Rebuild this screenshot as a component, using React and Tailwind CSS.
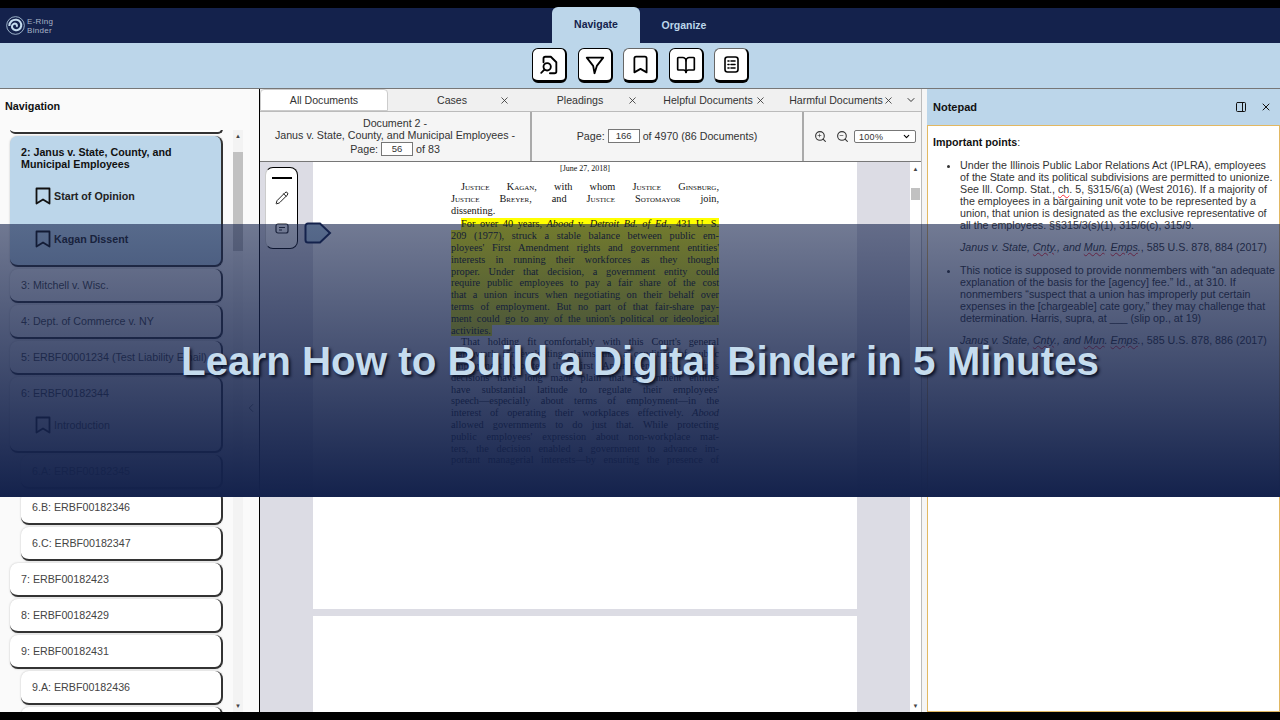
import React from 'react'
import { BookOpen, Bookmark, ChevronDown, ChevronLeft, Minus, PanelRight, Pencil, Plus, Search, X } from 'lucide-react'

const serif = "font-['Liberation_Serif',serif]"
const sc = '[font-variant:small-caps]'
const wavy = 'underline decoration-wavy decoration-red-500 decoration-1'

function NavItem({ label, child, active, children }) {
  return (
    <div className={`${child ? 'ml-[11px]' : ''} ${active ? 'bg-[#bcd6ea]' : 'bg-white'} ${children ? 'pb-[5px]' : 'pb-[10px]'} rounded-lg border-r-2 border-b-2 border-[#333] shadow-[0_0_2px_#bbb] mb-0.5 px-[11px] pt-[10px] min-h-[34px] text-[#444] text-[10.700px] leading-[12px]`}>
      <div className={active ? 'font-bold text-[#111]' : ''}>{label}</div>
      {children && <div className="mt-[4px]">{children}</div>}
    </div>
  )
}

function Mark({ label, strong }) {
  return (
    <div className={`flex items-center gap-[3px] ml-[14px] h-[43px] ${strong ? 'font-bold text-[#222]' : ''}`}>
      <svg width="16" height="18" viewBox="0 0 16 18" fill="none" stroke="#111" strokeWidth="1.800" strokeLinejoin="round">
        <path d="M1.500 1.500h13v15L8 12.500l-6.500 4z" />
      </svg>
      <span>{label}</span>
    </div>
  )
}

function Tab({ label, width, close, active }) {
  return (
    <div className={`${width} h-full flex items-center justify-center relative text-[#333] pt-px ${active ? 'bg-white rounded-t border border-[#ccc]' : ''}`}>
      <span>{label}</span>
      {close && <X size={11} strokeWidth={1.800} className="absolute right-[6px] text-[#333]" />}
    </div>
  )
}

function ToolBtn({ children, soft }) {
  return (
    <div className={`w-[35px] h-[35px] bg-white rounded-md border border-black border-r-[2px] border-b-[3px] ${soft ? 'border-t-[#666] border-l-[#666]' : ''} flex items-center justify-center text-black`}>
      {children}
    </div>
  )
}

function Line({ children }) {
  return <div className="text-justify [text-align-last:justify]">{children}</div>
}

const highlighted = [
  <>For over 40 years, <i>Abood</i> v. <i>Detroit Bd. of Ed.,</i> 431 U. S.</>,
  '209 (1977), struck a stable balance between public em-',
  "ployees' First Amendment rights and government entities'",
  'interests in running their workforces as they thought',
  'proper. Under that decision, a government entity could',
  'require public employees to pay a fair share of the cost',
  'that a union incurs when negotiating on their behalf over',
  'terms of employment. But no part of that fair-share pay-',
  "ment could go to any of the union's political or ideological",
]

const dissent = [
  'framework for evaluating claims that a condition of public',
  "employment violates the First Amendment. The Court's",
  'decisions have long made plain that government entities',
  "have substantial latitude to regulate their employees'",
  'speech—especially about terms of employment—in the',
  <>interest of operating their workplaces effectively. <i>Abood</i></>,
  'allowed governments to do just that. While protecting',
  "public employees' expression about non-workplace mat-",
  'ters, the decision enabled a government to advance im-',
  'portant managerial interests—by ensuring the presence of',
]

function Cite({ page }) {
  return (
    <>
      <i>Janus v. State, <span className={wavy}>Cnty</span>., and <span className={wavy}>Mun</span>. <span className={wavy}>Emps</span>.</i>, 585 U.S. 878, {page} (2017)
    </>
  )
}

export default function App() {
  return (
    <div className="relative w-[1280px] h-[720px] overflow-hidden bg-black font-['Liberation_Sans',Arial,sans-serif] flex flex-col">
      <div className="h-2 bg-black shrink-0" />

      {/* top nav */}
      <div className="h-[35px] shrink-0 bg-[#14224c] flex relative">
        <div className="flex items-center gap-[2px] pl-[6px] w-[552px]">
          <svg width="19" height="19" viewBox="0 0 20 20" fill="none" stroke="#c5dcee">
            <circle cx="10" cy="10" r="9.300" strokeWidth="0.800" />
            <path d="M3.500 10.500C3.500 6 7 3.500 11 4c3.500.5 5.500 3.500 5 6.500-.5 3-3.500 5-6.500 4.300C7 14.300 5.800 12 6.500 10c.6-1.600 2.500-2.500 4-1.700 1.200.7 1.300 2.200.4 3" strokeWidth="2.200" />
          </svg>
          <div className="text-[8px] leading-[9px] tracking-[0.3px] text-[#a9b4c6]">E-Ring<br />Binder</div>
        </div>
        <div className="w-[88px] -mt-[1px] h-[36px] bg-[#bcd6ea] rounded-t-md flex items-center justify-center text-[10.500px] font-bold text-[#14224c]">Navigate</div>
        <div className="w-[88px] flex items-center justify-center text-[10.500px] font-bold text-[#bcd6ea]">Organize</div>
      </div>

      {/* toolbar */}
      <div className="h-[46px] shrink-0 bg-[#bcd6ea] flex items-center gap-[10.500px] pl-[532px] border-b border-[#777]">
        <ToolBtn>
          <svg width="22" height="22" viewBox="0 0 24 24" fill="none" stroke="currentColor" strokeWidth="2" strokeLinecap="round" strokeLinejoin="round">
            <path d="M6 9V5a2 2 0 0 1 2-2h6l6 6v10a2 2 0 0 1-2 2h-5" />
            <circle cx="10" cy="14" r="4" />
            <path d="M7 17l-3.500 3.500" />
          </svg>
        </ToolBtn>
        <ToolBtn>
          <svg width="22" height="22" viewBox="0 0 24 24" fill="none" stroke="currentColor" strokeWidth="2" strokeLinecap="round" strokeLinejoin="round">
            <path d="M3 4h18l-7 9-2.500 8L10 13z" />
          </svg>
        </ToolBtn>
        <ToolBtn soft><Bookmark size={21} strokeWidth={2} /></ToolBtn>
        <ToolBtn><BookOpen size={20} strokeWidth={2} /></ToolBtn>
        <ToolBtn soft>
          <svg width="17" height="17" viewBox="0 0 17 17" fill="none" stroke="currentColor" strokeWidth="1.600" strokeLinecap="round">
            <rect x="2" y="1" width="13" height="15" rx="2.500" />
            <path d="M5 5h1M8 5h4M5 8.500h1M8 8.500h4M5 12h1M8 12h4" />
          </svg>
        </ToolBtn>
      </div>

      <div className="flex-1 flex min-h-0 bg-white">
        {/* navigation */}
        <div className="w-[260px] shrink-0 bg-[#fafafa] border-r border-black relative flex flex-col">
          <div className="h-[41px] shrink-0 pl-[5px] pb-[6px] flex items-center text-[10.800px] font-bold text-[#111]">Navigation</div>
          <div className="flex-1 min-h-0 overflow-hidden flex">
            <div className="w-[223px] pl-[10px] shrink-0 overflow-hidden">
              <div className="h-[5px] -mt-px mb-[2px] rounded-b-lg border-r-2 border-b-2 border-[#333] bg-white" />
              <NavItem label="2: Janus v. State, County, and Municipal Employees" active>
                <Mark label="Start of Opinion" strong />
                <Mark label="Kagan Dissent" strong />
              </NavItem>
              <NavItem label="3: Mitchell v. Wisc." />
              <NavItem label="4: Dept. of Commerce v. NY" />
              <div className="whitespace-nowrap"><NavItem label="5: ERBF00001234 (Test Liability Email)" /></div>
              <NavItem label="6: ERBF00182344">
                <Mark label="Introduction" />
              </NavItem>
              <NavItem label="6.A: ERBF00182345" child />
              <NavItem label="6.B: ERBF00182346" child />
              <NavItem label="6.C: ERBF00182347" child />
              <NavItem label="7: ERBF00182423" />
              <NavItem label="8: ERBF00182429" />
              <NavItem label="9: ERBF00182431" />
              <NavItem label="9.A: ERBF00182436" child />
              <NavItem label="" child />
            </div>
            <div className="w-[10px] ml-[10px] bg-[#f3f3f3] flex flex-col">
              <div className="h-[22px] text-[6px] text-center leading-[12px] text-[#444]">▲</div>
              <div className="h-[99px] bg-[#c1c1c1]" />
              <div className="flex-1" />
              <div className="text-[6px] text-center text-[#444] leading-[12px]">▼</div>
            </div>
          </div>
          <ChevronLeft size={14} strokeWidth={1.500} className="absolute left-[244px] top-[312px] text-[#666]" />
        </div>

        {/* document viewer */}
        <div className="w-[662px] shrink-0 flex flex-col border-r border-[#bbb]">
          <div className="h-[23px] shrink-0 bg-[#f0f0f0] flex items-center text-[10.600px] border-b border-[#bbb]">
            <Tab label="All Documents" width="w-[128px]" active />
            <Tab label="Cases" width="w-[128px]" close />
            <Tab label="Pleadings" width="w-[128px]" close />
            <Tab label="Helpful Documents" width="w-[128px]" close />
            <Tab label="Harmful Documents" width="w-[128px]" close />
            <ChevronDown size={12} className="text-[#333] ml-[5px]" />
          </div>
          <div className="h-[50px] shrink-0 bg-[#f5f5f5] flex text-[10.700px] leading-[12px] text-[#333] border-b border-[#777]">
            <div className="w-[272px] border-r-2 border-[#aaa] flex flex-col items-center justify-center">
              <div>Document 2 -</div>
              <div>Janus v. State, County, and Municipal Employees -</div>
              <div className="flex items-center gap-[3px] mt-px">Page:
                <span className="w-[32px] h-[14px] bg-white border border-[#777] text-center text-[9.500px] leading-[12px]">56</span> of 83</div>
            </div>
            <div className="w-[272px] border-r-2 border-[#aaa] flex items-center justify-center gap-[3px] pb-px">Page:
              <span className="w-[32px] h-[14px] bg-white border border-[#777] text-center text-[9.500px] leading-[12px]">166</span> of 4970 (86 Documents)</div>
            <div className="flex-1 flex items-center pl-[10px] gap-[9px]">
              <span className="relative"><Search size={13} strokeWidth={2} /><Plus size={5} strokeWidth={3} className="absolute left-[3px] top-[3px]" /></span>
              <span className="relative"><Search size={13} strokeWidth={2} /><Minus size={5} strokeWidth={3} className="absolute left-[3px] top-[3px]" /></span>
              <div className="w-[62px] h-[13px] -ml-[4px] bg-white border border-[#777] rounded-[2px] flex items-center justify-between px-1 text-[9px] tracking-[0.3px]">100%<ChevronDown size={9} strokeWidth={3} className="text-black" /></div>
            </div>
          </div>
          <div className="flex-1 min-h-0 flex relative">
            <div className="flex-1 bg-[#dcdce4] overflow-hidden flex flex-col items-center">
              <div className={`w-[544px] h-[447px] shrink-0 bg-white ${serif} text-[10.300px] leading-[11.800px] text-[#111] px-[138px]`}>
                <div className="text-center text-[8px] leading-[12px] pt-[1px] h-[19px]">[June 27, 2018]</div>
                <Line><span className="pl-[10px]"><span className={sc}>Justice Kagan</span>, with whom <span className={sc}>Justice Ginsburg</span>,</span></Line>
                <Line><span className={sc}>Justice Breyer</span>, and <span className={sc}>Justice Sotomayor</span> join,</Line>
                <div>dissenting.</div>
                <div className="mt-[2px]">
                  {highlighted.map((text, i) => (
                    <div key={i} className={`${i === 0 ? 'ml-[10px]' : ''} bg-[#ffff00] text-justify [text-align-last:justify]`}>{text}</div>
                  ))}
                  <div className="bg-[#ffff00] w-fit pr-px">activities.</div>
                </div>
                <Line><span className="pl-[10px]">That holding fit comfortably with this Court's general</span></Line>
                {dissent.map((text, i) => <Line key={i}>{text}</Line>)}
              </div>
              <div className="w-[544px] h-[100px] shrink-0 mt-[7px] bg-white" />
            </div>
            <div className="w-[11px] shrink-0 bg-white flex flex-col items-center">
              <div className="h-[26px] text-[6px] text-[#444] leading-[14px]">▲</div>
              <div className="w-[9px] h-[12px] bg-[#c1c1c1]" />
              <div className="flex-1" />
              <div className="text-[6px] text-[#444] leading-[12px]">▼</div>
            </div>
            {/* floating annotation tools */}
            <div className="absolute left-[5px] top-[5px] w-[33px] h-[82px] bg-white rounded-lg border border-l-[#ccc] border-black flex flex-col items-center pt-[9px]">
              <div className="w-5 h-[2px] bg-black" />
              <Pencil size={14} strokeWidth={1.500} className="mt-[12px]" />
              <svg width="14" height="12" viewBox="0 0 14 12" fill="none" stroke="#222" strokeWidth="1.200" className="mt-[18px]">
                <rect x="1" y="1" width="12" height="9" rx="2" />
                <path d="M4 4.500h6M4 7h3" />
              </svg>
            </div>
            <svg width="28" height="22" viewBox="0 0 28 22" className="absolute left-[44px] top-[60px]" fill="#bcd6ea" stroke="#14224c" strokeWidth="2">
              <path d="M4 1.500h12l10 9.500-10 9.500H4A2.500 2.500 0 0 1 1.500 18V4A2.500 2.500 0 0 1 4 1.500z" />
            </svg>
          </div>
        </div>

        <div className="w-[5px] shrink-0 bg-[#f5f5f5]" />

        {/* notepad */}
        <div className="flex-1 flex flex-col bg-white">
          <div className="h-[36px] shrink-0 bg-[#bcd6ea] flex items-center pl-[6px] pr-[8px] text-[11px] font-bold text-[#111]">
            <span className="flex-1">Notepad</span>
            <PanelRight size={12} strokeWidth={2} className="mr-[13px]" />
            <X size={12} strokeWidth={2} />
          </div>
          <div className="flex-1 min-h-0 border border-[#e2b862] pt-[10px] pl-[5px] pr-[4px] text-[10.700px] leading-[12px] text-[#333]">
            <div className="mb-[11px]"><b className="text-[#111]">Important points</b>:</div>
            <ul className="list-disc pl-[27px] m-0">
              <li>
                Under the Illinois Public Labor Relations Act (IPLRA), employees of the State and its political subdivisions are permitted to unionize. See Ill. Comp. Stat., <span className={wavy}>ch</span>. 5, §315/6(a) (West 2016). If a majority of the employees in a bargaining unit vote to be represented by a union, that union is designated as the exclusive representative of all the employees. §§315/3(s)(1), 315/6(c), 315/9.
                <div className="mt-[10px] mb-[11px]"><Cite page="884" /></div>
              </li>
              <li>
                This notice is supposed to provide nonmembers with “an adequate explanation of the basis for the [agency] fee.” Id., at 310. If nonmembers “suspect that a union has improperly put certain expenses in the [chargeable] cate gory,” they may challenge that determination. Harris, supra, at ___ (slip op., at 19)
                <div className="mt-[10px]"><Cite page="886" /></div>
              </li>
            </ul>
          </div>
        </div>
      </div>

      <div className="h-2 bg-black shrink-0" />

      {/* video title banner */}
      <div className="absolute left-0 right-0 top-[224px] h-[273px] bg-gradient-to-b from-[#14224c]/60 to-[#14224c] flex items-center justify-center">
        <h1 className="text-[40.300px] font-bold whitespace-nowrap text-[#c5dcee] [text-shadow:2px_2px_3px_#0a1228] mt-[3px]">Learn How to Build a Digital Binder in 5 Minutes</h1>
      </div>
    </div>
  )
}
